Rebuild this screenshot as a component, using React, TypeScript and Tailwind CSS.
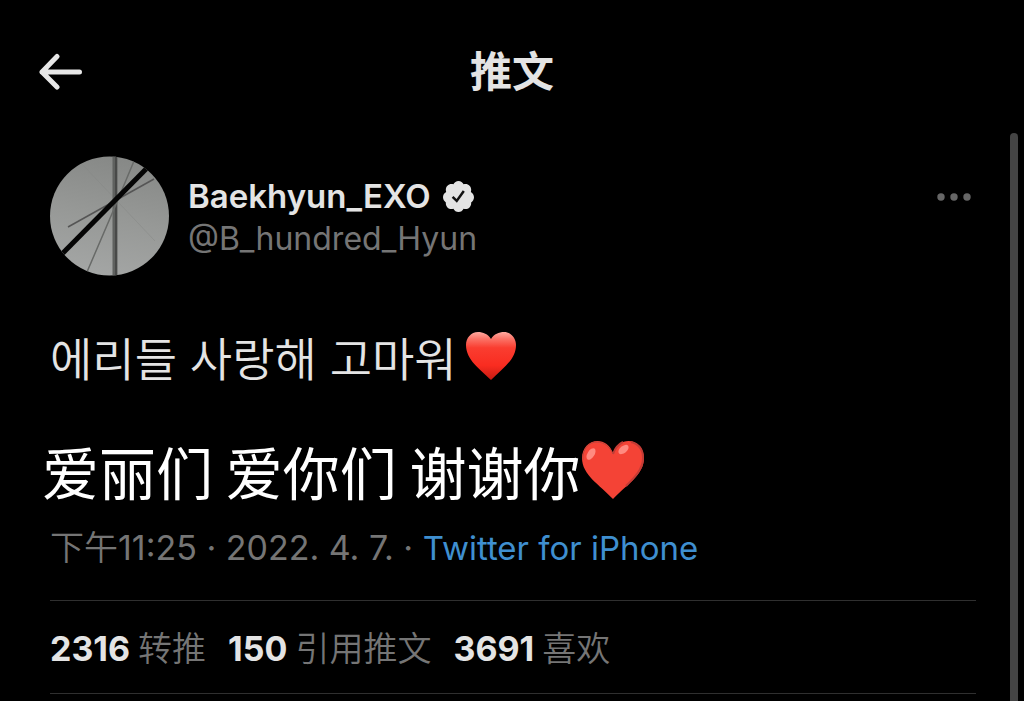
const stats = [
  { count: '2316', label: '转推' },
  { count: '150', label: '引用推文' },
  { count: '3691', label: '喜欢' },
];

function BackIcon() {
  return (
    <svg viewBox="0 0 44 38" className="h-[38px] w-11" fill="none" stroke="#e7e7e7" strokeWidth="5" strokeLinecap="round" strokeLinejoin="round" aria-hidden="true">
      <path d="M18 3.500 3 19l15 15M3 19h37.500" />
    </svg>
  );
}

function Avatar() {
  return (
    <svg viewBox="0 0 120 120" className="size-[120px] shrink-0" role="img" aria-label="Baekhyun_EXO">
      <defs>
        <clipPath id="avatar-clip">
          <circle cx="59.500" cy="60" r="59.500" />
        </clipPath>
        <linearGradient id="avatar-sky" x1="0.600" y1="0" x2="0.400" y2="1">
          <stop offset="0" stopColor="#868886" />
          <stop offset="0.500" stopColor="#969896" />
          <stop offset="1" stopColor="#a4a6a5" />
        </linearGradient>
      </defs>
      <g clipPath="url(#avatar-clip)">
        <rect width="120" height="120" fill="url(#avatar-sky)" />
        <path d="M32 8 105 85" stroke="#858785" strokeWidth="1" opacity="0.500" />
        <path d="M65 0V120" stroke="#5f615f" strokeWidth="5" />
        <path d="M66 0V120" stroke="#484948" strokeWidth="2" />
        <path d="M18 71 104 23" stroke="#555" strokeWidth="1.500" />
        <path d="M84 5 64 53 37 116" stroke="#686a68" strokeWidth="1.500" fill="none" />
        <path d="M10 100 99 10" stroke="#050505" strokeWidth="5" />
      </g>
    </svg>
  );
}

function VerifiedIcon() {
  return (
    <svg viewBox="1.500 1.500 21 21" className="size-[31px] shrink-0" role="img" aria-label="已认证">
      <path fill="#e4e4e4" d="M22.500 12.500c0-1.580-.875-2.950-2.148-3.600.154-.435.238-.905.238-1.400 0-2.210-1.710-3.998-3.818-3.998-.47 0-.92.084-1.336.250C14.818 2.415 13.510 1.500 12 1.500s-2.816.917-3.437 2.250c-.415-.165-.866-.250-1.336-.250-2.110 0-3.818 1.790-3.818 4 0 .494.083.964.237 1.400-1.272.650-2.147 2.018-2.147 3.600 0 1.495.782 2.798 1.942 3.486-.020.170-.032.340-.032.514 0 2.210 1.708 4 3.818 4 .470 0 .920-.086 1.335-.250.620 1.334 1.926 2.250 3.437 2.250 1.512 0 2.818-.916 3.437-2.250.415.163.865.248 1.336.248 2.110 0 3.818-1.790 3.818-4 0-.174-.012-.344-.033-.513 1.158-.687 1.943-1.990 1.943-3.484z" />
      <path d="M8 12.300 10.800 15 15.600 8.300" fill="none" stroke="#111" strokeWidth="1.700" />
    </svg>
  );
}

function GlossyHeart() {
  return (
    <svg viewBox="0 0 52 50" className="h-[50px] w-[52px]" role="img" aria-label="红心">
      <defs>
        <linearGradient id="heart-red" x1="0" y1="0" x2="0" y2="1">
          <stop offset="0" stopColor="#ffaaa0" />
          <stop offset="0.140" stopColor="#fb7468" />
          <stop offset="0.330" stopColor="#fa3d30" />
          <stop offset="0.700" stopColor="#f92c20" />
          <stop offset="1" stopColor="#c51b12" />
        </linearGradient>
      </defs>
      <path fill="url(#heart-red)" d="M26 8C23 3 18 1 13 1 6 1 1 7 1 14c0 15 14 24 25 35C37 38 51 29 51 14 51 7 46 1 39 1c-5 0-10 2-13 7Z" />
    </svg>
  );
}

function FlatHeart() {
  return (
    <svg viewBox="0 0 64 60" className="h-[60px] w-16" role="img" aria-label="红心">
      <path fill="#f44336" d="M32 13C29 5 23 1 16.500 1 8 1 1 8 1 18c0 17 18 27 31 41 13-14 31-24 31-41C63 8 56 1 47.500 1 41 1 35 5 32 13Z" />
      <path fill="none" stroke="#c33b35" strokeWidth="2" d="M50 2c8 2 12 8 12 16 0 11-8 19-17 28M32 14c2-6 6-10 10-12" />
      <path fill="none" stroke="#bd463d" strokeWidth="1" d="M2 20C1 9 8 2 16 2c7 0 13 5 16 12" />
      <ellipse cx="10" cy="14" rx="3.500" ry="6.500" transform="rotate(32 10 14)" fill="#ff8a80" />
      <ellipse cx="42.500" cy="9.500" rx="3.500" ry="6" transform="rotate(50 42.500 9.500)" fill="#ff8a80" />
    </svg>
  );
}

export default function App() {
  return (
    <div className="relative min-h-screen overflow-hidden bg-black font-['Inter','Noto_Sans_CJK_SC',sans-serif] text-[#e4e4e4]" lang="zh-CN">
      <header className="grid grid-cols-[1fr_auto_1fr] items-center px-[39px] pt-9 pb-9">
        <button type="button" aria-label="返回" className="justify-self-start">
          <BackIcon />
        </button>
        <h1 className="text-[42px] leading-[72px] font-bold">推文</h1>
      </header>

      <article className="pt-3 pr-12 pl-[50px]">
        <div className="flex items-start">
          <Avatar />
          <div className="ml-[18px] pt-5">
            <div className="flex items-center gap-3">
              <span className="text-[33px] leading-10 font-semibold">Baekhyun_EXO</span>
              <VerifiedIcon />
            </div>
            <a href="#profile" className="block text-[32px] leading-[46px] text-[#757575]">@B_hundred_Hyun</a>
          </div>
          <button type="button" aria-label="更多" className="mt-8 mr-1 ml-auto">
            <svg viewBox="0 0 36 18" className="h-[18px] w-9" fill="#666" aria-hidden="true">
              <circle cx="5" cy="9" r="3.700" />
              <circle cx="18" cy="9" r="3.700" />
              <circle cx="31" cy="9" r="3.700" />
            </svg>
          </button>
        </div>

        <p lang="ko" className="mt-11 flex items-center gap-2 font-['Noto_Sans_CJK_KR',sans-serif] text-[46px] leading-[72px] font-[350]">
          에리들 사랑해 고마워
          <GlossyHeart />
        </p>

        <p className="mt-9 -ml-2 flex items-center font-['Noto_Sans_CJK_SC',sans-serif] text-[57px] leading-[84px] text-white">
          爱丽们 爱你们 谢谢你
          <FlatHeart />
        </p>

        <p className="mt-2 text-[34px] leading-[56px] text-[#757575]">
          <span className="font-[350]">下午</span>11:25 · 2022. 4. 7. · <a href="#source" className="text-[33px] text-[#3f8fd0]">Twitter for iPhone</a>
        </p>

        <ul className="mt-6 flex gap-[22px] border-y border-[#2f2f2f] pt-[22px] pb-[18px] text-[34px] leading-[52px]">
          {stats.map((stat) => (
            <li key={stat.label}>
              <a href="#stats" className="flex gap-2">
                <span className="font-bold">{stat.count}</span>
                <span className="font-[350] text-[#757575]">{stat.label}</span>
              </a>
            </li>
          ))}
        </ul>
      </article>

      <div className="absolute top-[133px] right-[6px] bottom-0 w-2 rounded-t-full bg-[#444]" aria-hidden="true" />
    </div>
  );
}
